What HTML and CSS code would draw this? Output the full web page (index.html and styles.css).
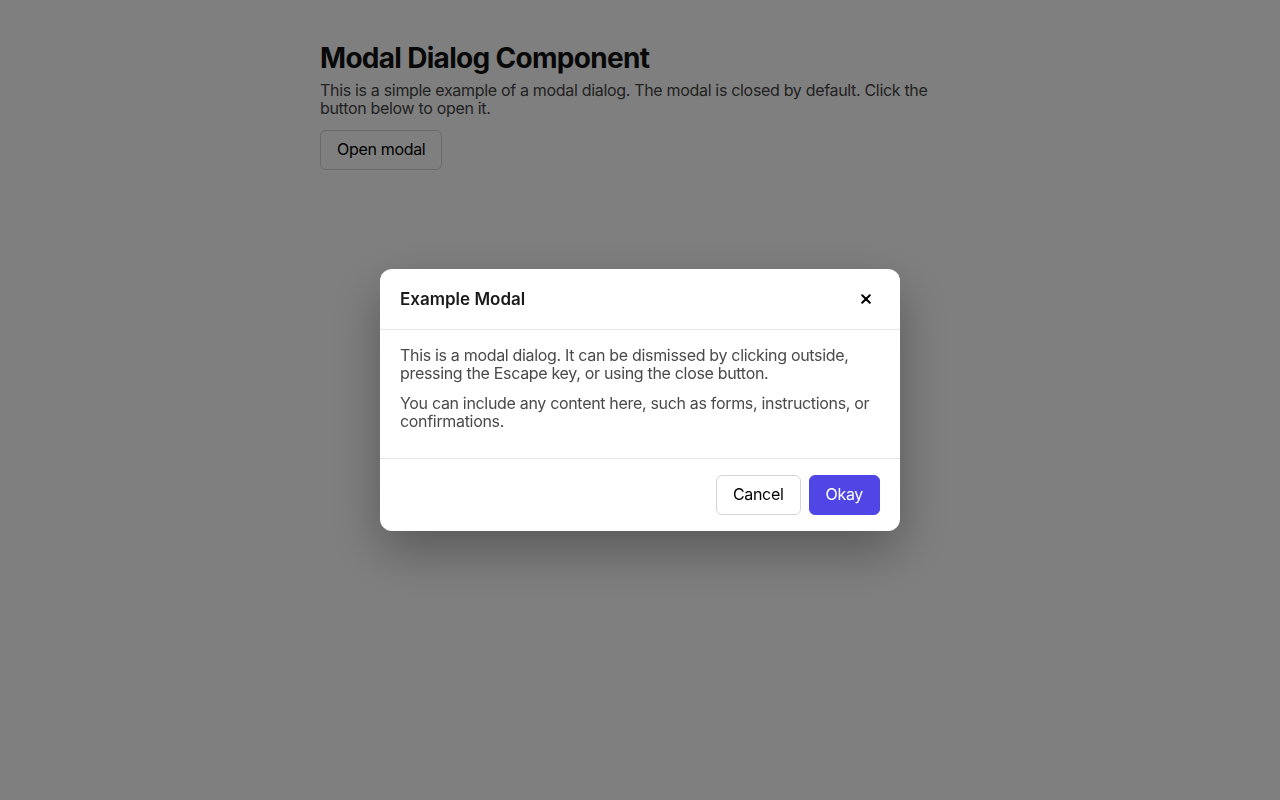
FILE: index.html
```html
<!DOCTYPE html>
<html lang="en">
<head>
<meta charset="utf-8">
<title>Modal Dialog Component</title>
<link rel="stylesheet" href="styles.css">
</head>
<body>
<main class="page">
  <h1 class="page-title">Modal Dialog Component</h1>
  <p class="page-text">This is a simple example of a modal dialog. The modal is closed by default. Click the button below to open it.</p>
  <button class="btn btn-outline" type="button">Open modal</button>
</main>

<div class="overlay">
  <div class="modal" role="dialog" aria-modal="true" aria-labelledby="modal-title">
    <header class="modal-header">
      <h2 class="modal-title" id="modal-title">Example Modal</h2>
      <button class="modal-close" type="button" aria-label="Close">
        <svg width="10" height="10" viewBox="0 0 10 10" aria-hidden="true"><path d="M1.2 1.2 L8.8 8.8 M8.8 1.2 L1.2 8.8" stroke="#000" stroke-width="2" stroke-linecap="round"/></svg>
      </button>
    </header>
    <div class="modal-body">
      <p>This is a modal dialog. It can be dismissed by clicking outside, pressing the Escape key, or using the close button.</p>
      <p>You can include any content here, such as forms, instructions, or confirmations.</p>
    </div>
    <footer class="modal-footer">
      <button class="btn btn-outline" type="button">Cancel</button>
      <button class="btn btn-primary" type="button">Okay</button>
    </footer>
  </div>
</div>
</body>
</html>
```

FILE: styles.css
```css
* { box-sizing: border-box; }

html, body {
  margin: 0;
  height: 100%;
}

body {
  font-family: Inter, "Noto Sans", "Liberation Sans", sans-serif;
  background: #ffffff;
  color: #111111;
  letter-spacing: -0.32px;
}

.page {
  max-width: 640px;
  margin: 0 auto;
  padding: 41px 0 40px;
}

.page-title {
  margin: 0 0 6px;
  font-size: 28px;
  line-height: 34px;
  font-weight: 700;
  letter-spacing: -0.7px;
  color: #111111;
}

.page-text {
  margin: 0 0 13px;
  font-size: 16px;
  line-height: 18px;
  color: #444444;
}

.btn {
  font-family: inherit;
  font-size: 16px;
  line-height: 20px;
  letter-spacing: -0.32px;
  height: 40px;
  padding: 0 16px 2px;
  border-radius: 6px;
  cursor: pointer;
}

.btn-outline {
  background: #ffffff;
  border: 1px solid #d4d4d8;
  color: #000000;
}

.btn-primary {
  background: #4f46e5;
  border: 1px solid #4f46e5;
  color: #ffffff;
}

.overlay {
  position: fixed;
  inset: 0;
  background: rgba(0, 0, 0, 0.5);
  display: flex;
  align-items: center;
  justify-content: center;
}

.modal {
  width: 520px;
  background: #ffffff;
  border-radius: 12px;
  box-shadow: 0 20px 50px rgba(0, 0, 0, 0.3);
  overflow: hidden;
}

.modal-header {
  height: 61px;
  padding: 0 20px;
  display: flex;
  align-items: center;
  justify-content: space-between;
  border-bottom: 1px solid #e5e5e5;
}

.modal-title {
  margin: 0;
  font-size: 17px;
  font-weight: 600;
  letter-spacing: 0;
  color: #1a1a1a;
}

.modal-close {
  width: 28px;
  height: 28px;
  border: 0;
  background: transparent;
  display: flex;
  align-items: center;
  justify-content: center;
  padding: 0;
  cursor: pointer;
}

.modal-body {
  padding: 16px 20px 16px;
  border-bottom: 1px solid #e5e5e5;
}

.modal-body p {
  margin: 0 0 12px;
  font-size: 16px;
  line-height: 18px;
  color: #4a4a4a;
}

.modal-footer {
  padding: 16px 20px;
  display: flex;
  justify-content: flex-end;
  gap: 8px;
}
```
